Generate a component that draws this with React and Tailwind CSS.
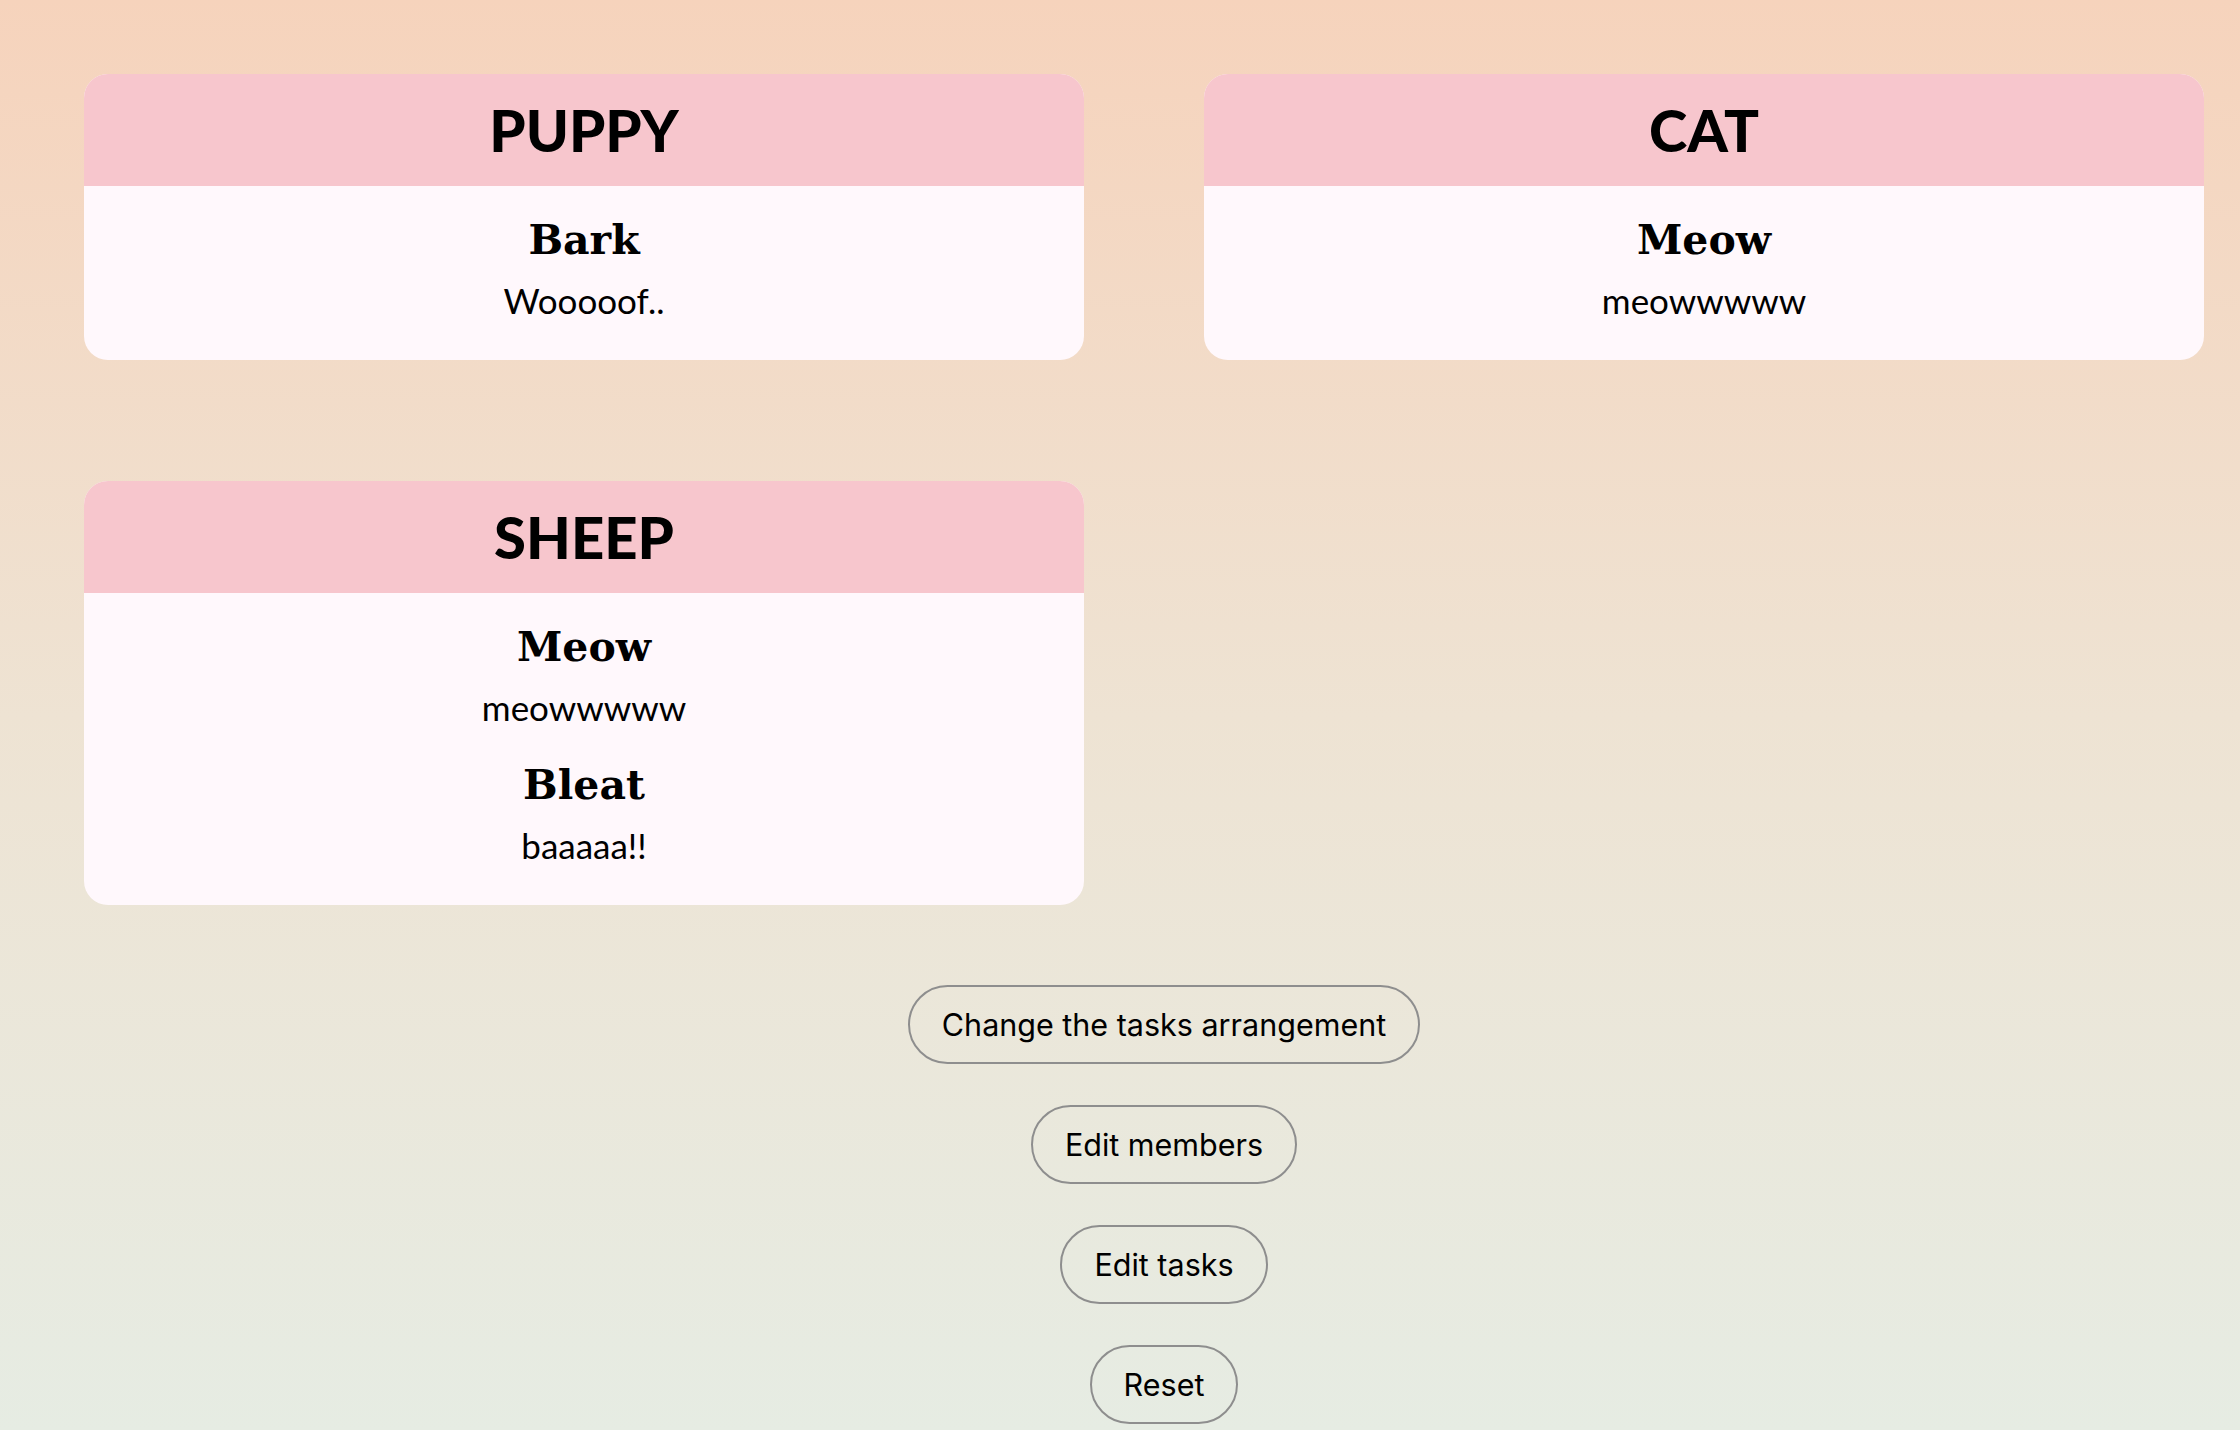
import React from "react";

const cards = [
  { name: "PUPPY", tasks: [{ t: "Bark", d: "Wooooof.." }] },
  { name: "CAT", tasks: [{ t: "Meow", d: "meowwwww" }] },
  {
    name: "SHEEP",
    tasks: [
      { t: "Meow", d: "meowwwww" },
      { t: "Bleat", d: "baaaaa!!" },
    ],
  },
];

function Card({ name, tasks }) {
  return (
    <div className="rounded-[24px] overflow-hidden bg-[#fff8fc]">
      <div className="h-[112px] bg-[#f7c6cd] flex items-center justify-center">
        <h2 className="text-[58px] leading-none font-black text-black [font-family:Lato,'Noto_Sans',sans-serif]">
          {name}
        </h2>
      </div>
      <div className="pt-[24px] pb-[30px] flex flex-col gap-[18px]">
        {tasks.map((x, i) => (
          <div key={i} className="flex flex-col items-center text-black">
            <div className="h-[60px] leading-[60px] text-[41px] font-bold [font-family:'DejaVu_Serif',serif]">
              {x.t}
            </div>
            <div className="h-[60px] leading-[60px] text-[35px] [font-family:Lato,'Noto_Sans',sans-serif]">
              {x.d}
            </div>
          </div>
        ))}
      </div>
    </div>
  );
}

export default function App() {
  const buttons = [
    "Change the tasks arrangement",
    "Edit members",
    "Edit tasks",
    "Reset",
  ];
  return (
    <div className="min-h-[1430px] w-full bg-gradient-to-b from-[#f6d3bc] via-[#eee3d3] to-[#e6ece3] pt-[74px] pl-[84px] pr-[36px]">
      <div className="grid grid-cols-2 gap-x-[120px] gap-y-[121px] items-start">
        {cards.map((c) => (
          <Card key={c.name} {...c} />
        ))}
      </div>
      <div className="flex flex-col items-center gap-[41px] mt-[80px] pl-[4px] mr-[-36px]">
        {buttons.map((b) => (
          <button
            key={b}
            className="h-[79px] px-[32px] rounded-full border-2 border-[#8e8e8e] bg-transparent text-black text-[30.5px] [font-family:Inter,'Noto_Sans',sans-serif]"
          >
            {b}
          </button>
        ))}
      </div>
    </div>
  );
}
